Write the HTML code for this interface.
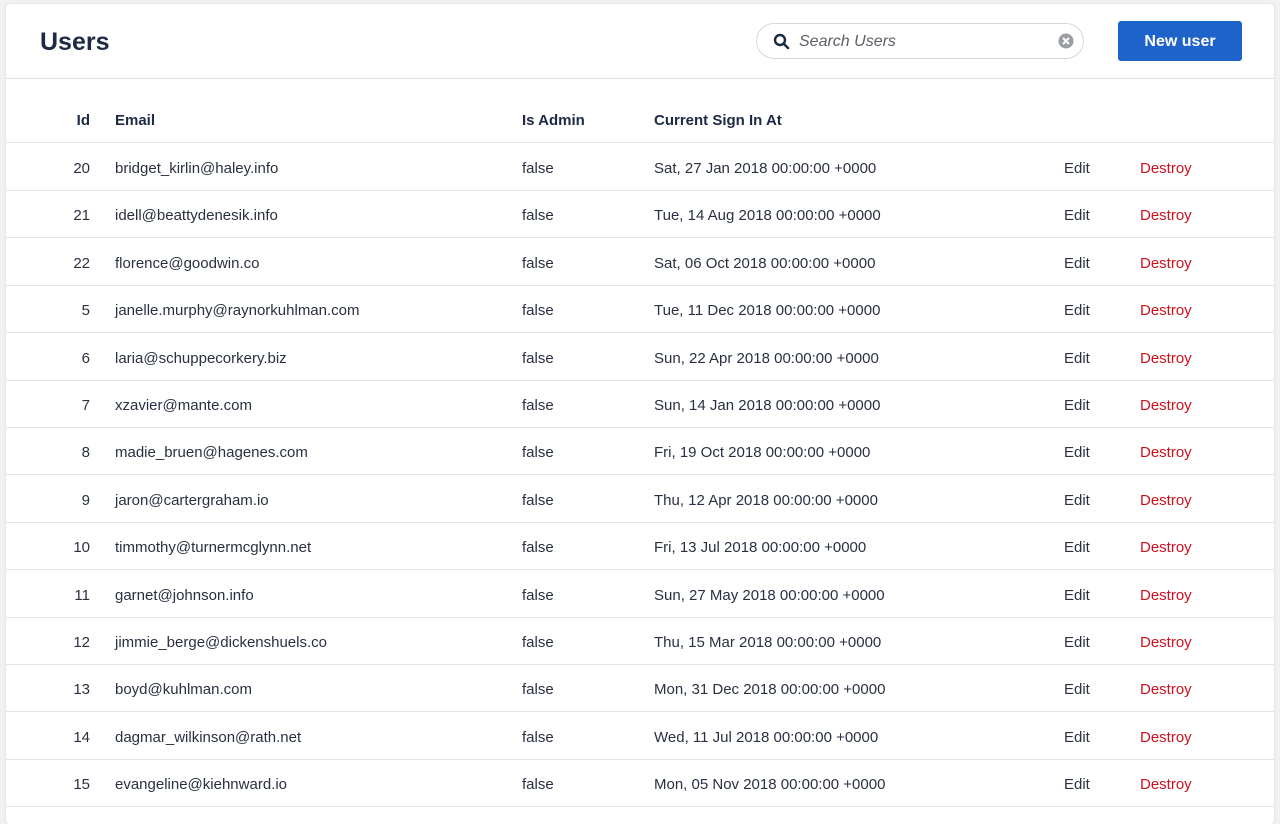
<!DOCTYPE html>
<html><head><style>
body{margin:0;background:#f0f1f1;font-family:"Liberation Sans",sans-serif;color:#293041;width:1280px;height:802px;overflow:hidden}
.card{position:absolute;left:6px;top:4px;width:1268px;height:820px;background:#fff;border-radius:4px;box-shadow:0 0 2px rgba(0,0,0,.12)}
.hdr{height:74px;border-bottom:1px solid #dfe0e1;position:relative}
h1{position:absolute;left:34px;top:24px;margin:0;font-size:25px;color:#1c2a44;font-weight:bold}
.search{position:absolute;left:750px;top:19px;width:326px;height:34px;border:1px solid #d5d7da;border-radius:18px}
.search span{position:absolute;left:42px;top:9px;font-style:italic;font-size:16px;color:#5d6068}
.btn{position:absolute;left:1112px;top:17px;width:124px;height:40px;background:#1d63c9;border-radius:3px;color:#fff;font-weight:bold;font-size:16px;text-align:center;line-height:41px}
.row{position:absolute;left:0;width:1268px;height:47px;border-bottom:1px solid #e1e2e3;font-size:15px}
.row div{position:absolute;top:17px}
.th div{font-weight:bold;color:#1c2a44}
.id{right:1184px;text-align:right}
.em{left:109px}.ad{left:516px}.dt{left:648px}.ed{left:1058px}.de{left:1134px;color:#d0101d}
</style></head><body>
<div class="card">
<div class="hdr"><h1>Users</h1>
<div class="search"><svg style="position:absolute;left:16px;top:9px" width="17" height="17" viewBox="0 0 17 17"><circle cx="7" cy="7" r="5" fill="none" stroke="#1c2a44" stroke-width="2.4"/><path d="M10.5 10.5L15 15" stroke="#1c2a44" stroke-width="2.6" stroke-linecap="round"/></svg><span>Search Users</span>
<svg style="position:absolute;left:301px;top:9px" width="16" height="16" viewBox="0 0 16 16"><circle cx="8" cy="8" r="7.5" fill="#9a9ea4"/><path d="M5 5L11 11M11 5L5 11" stroke="#fff" stroke-width="2"/></svg></div>
<div class="btn">New user</div></div>
<div class="row th" style="top:91px"><div class="id">Id</div><div class="em">Email</div><div class="ad">Is Admin</div><div class="dt">Current Sign In At</div></div>
</div>
<script>
var d=[["20","bridget_kirlin@haley.info","Sat, 27 Jan 2018"],["21","idell@beattydenesik.info","Tue, 14 Aug 2018"],["22","florence@goodwin.co","Sat, 06 Oct 2018"],["5","janelle.murphy@raynorkuhlman.com","Tue, 11 Dec 2018"],["6","laria@schuppecorkery.biz","Sun, 22 Apr 2018"],["7","xzavier@mante.com","Sun, 14 Jan 2018"],["8","madie_bruen@hagenes.com","Fri, 19 Oct 2018"],["9","jaron@cartergraham.io","Thu, 12 Apr 2018"],["10","timmothy@turnermcglynn.net","Fri, 13 Jul 2018"],["11","garnet@johnson.info","Sun, 27 May 2018"],["12","jimmie_berge@dickenshuels.co","Thu, 15 Mar 2018"],["13","boyd@kuhlman.com","Mon, 31 Dec 2018"],["14","dagmar_wilkinson@rath.net","Wed, 11 Jul 2018"],["15","evangeline@kiehnward.io","Mon, 05 Nov 2018"]];
var c=document.querySelector('.card'),h='';
d.forEach(function(r,i){h+='<div class="row" style="top:'+(139+i*47.4)+'px"><div class="id">'+r[0]+'</div><div class="em">'+r[1]+'</div><div class="ad">false</div><div class="dt">'+r[2]+' 00:00:00 +0000</div><div class="ed">Edit</div><div class="de">Destroy</div></div>'});
c.insertAdjacentHTML('beforeend',h);
</script>
</body></html>
